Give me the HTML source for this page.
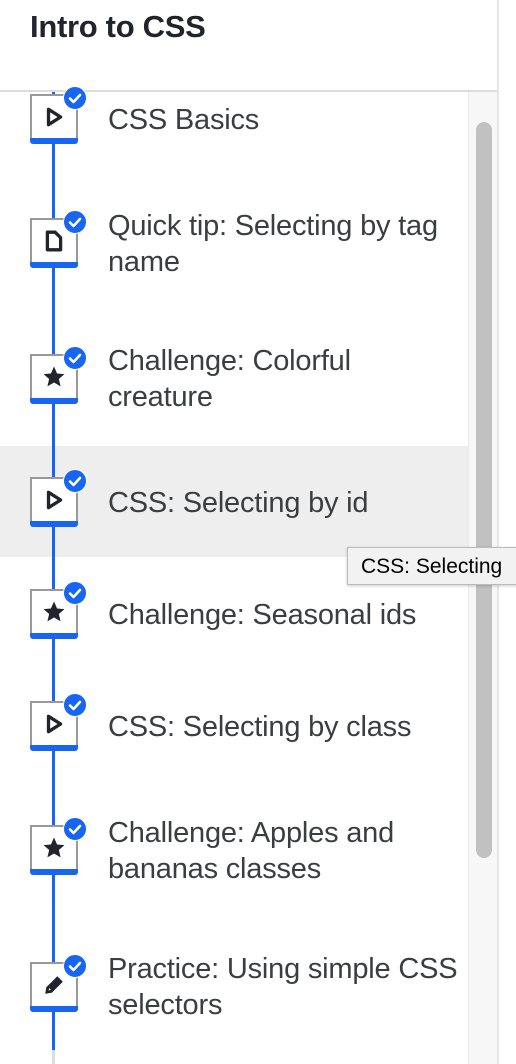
<!DOCTYPE html><html><head><style>
body{margin:0;width:516px;height:1064px;position:relative;overflow:hidden;background:#fff;font-family:"Liberation Sans",sans-serif;color:#3b3e40}
.hdr{position:absolute;left:30px;top:9px;font-size:31px;font-weight:bold;color:#21242c;letter-spacing:-0.3px}
.hl{position:absolute;left:0;top:90px;width:498px;height:2px;background:#ddd}
.vl{position:absolute;left:497px;top:0;width:2px;height:1064px;background:#e6e6e6}
.track{position:absolute;left:468px;top:92px;width:29px;height:972px;background:#f7f7f7;border-left:1px solid #ececec}
.thumb{position:absolute;left:476px;top:122px;width:16px;height:736px;border-radius:8px;background:#c1c1c1}
.line{position:absolute;left:52px;top:92px;width:3px;height:958px;background:#1865f2}
.line2{position:absolute;left:52px;top:1050px;width:3px;height:14px;background:#ddd}
.sel{position:absolute;left:0;top:446px;width:468px;height:111px;background:#eee}
.ic{position:absolute;left:30px;width:44px;height:42px;background:#fff;border:2px solid #999;border-bottom:none}
.ic::after{content:"";position:absolute;left:-2px;right:-2px;bottom:-6px;height:6px;background:#1865f2;border-radius:0 0 3px 3px}
.ic svg.g{position:absolute;left:11px;top:10px}
.bd{position:absolute;left:31px;top:-10px;width:22px;height:22px;border-radius:50%;background:#1865f2;border:1px solid #fff}
.t{position:absolute;left:108px;font-size:29px;line-height:36px;width:355px;letter-spacing:-0.2px}
.tip{position:absolute;left:347px;top:547px;width:175px;height:38px;background:#f2f2f2;border:1px solid #bbb;box-shadow:0 1px 3px rgba(0,0,0,.2);font-size:21px;line-height:38px;padding-left:13px;color:#000;box-sizing:border-box;white-space:nowrap;overflow:hidden}
</style></head><body>
<div class="hdr">Intro to CSS</div>
<div class="sel"></div>
<div class="track"></div><div class="thumb"></div>
<div class="hl"></div><div class="vl"></div>
<div class="line"></div><div class="line2"></div>

<svg width="0" height="0" style="position:absolute"><defs>
<symbol id="play" viewBox="0 0 20 20"><path d="M5 3 L16 10 L5 17 Z" fill="none" stroke="#21242c" stroke-width="3" stroke-linejoin="round"/></symbol>
<symbol id="doc" viewBox="0 0 20 20"><path d="M4 2 H11 L16 7 V18 H4 Z" fill="none" stroke="#21242c" stroke-width="3" stroke-linejoin="round"/></symbol>
<symbol id="star" viewBox="0 0 20 20"><path d="M10 0.5 L12.8 6.8 L19.5 7.4 L14.4 11.8 L16 18.5 L10 15 L4 18.5 L5.6 11.8 L0.5 7.4 L7.2 6.8 Z" fill="#21242c"/></symbol>
<symbol id="pen" viewBox="0 0 20 20"><path d="M2 18 L3 12 L13 2 L18 7 L8 17 Z" fill="#21242c"/><path d="M5 15 L5.8 12.8 L7.2 14.2 Z" fill="#fff"/></symbol>
<symbol id="chk" viewBox="0 0 22 22"><path d="M6 11.5 L9.5 15 L16 8" fill="none" stroke="#fff" stroke-width="2.6" stroke-linecap="round" stroke-linejoin="round"/></symbol>
</defs></svg>

<div class="ic" style="top:94px"><svg class="g" width="22" height="22"><use href="#play"/></svg><div class="bd"><svg width="22" height="22"><use href="#chk"/></svg></div></div>
<div class="t" style="top:102px">CSS Basics</div>

<div class="ic" style="top:218px"><svg class="g" width="22" height="22"><use href="#doc"/></svg><div class="bd"><svg width="22" height="22"><use href="#chk"/></svg></div></div>
<div class="t" style="top:208px">Quick tip: Selecting by tag name</div>

<div class="ic" style="top:354px"><svg class="g" width="22" height="22"><use href="#star"/></svg><div class="bd"><svg width="22" height="22"><use href="#chk"/></svg></div></div>
<div class="t" style="top:343px">Challenge: Colorful creature</div>

<div class="ic" style="top:477px"><svg class="g" width="22" height="22"><use href="#play"/></svg><div class="bd"><svg width="22" height="22"><use href="#chk"/></svg></div></div>
<div class="t" style="top:485px">CSS: Selecting by id</div>

<div class="ic" style="top:589px"><svg class="g" width="22" height="22"><use href="#star"/></svg><div class="bd"><svg width="22" height="22"><use href="#chk"/></svg></div></div>
<div class="t" style="top:597px">Challenge: Seasonal ids</div>

<div class="ic" style="top:701px"><svg class="g" width="22" height="22"><use href="#play"/></svg><div class="bd"><svg width="22" height="22"><use href="#chk"/></svg></div></div>
<div class="t" style="top:709px">CSS: Selecting by class</div>

<div class="ic" style="top:825px"><svg class="g" width="22" height="22"><use href="#star"/></svg><div class="bd"><svg width="22" height="22"><use href="#chk"/></svg></div></div>
<div class="t" style="top:815px">Challenge: Apples and bananas classes</div>

<div class="ic" style="top:962px"><svg class="g" width="22" height="22"><use href="#pen"/></svg><div class="bd"><svg width="22" height="22"><use href="#chk"/></svg></div></div>
<div class="t" style="top:951px">Practice: Using simple CSS selectors</div>

<div class="tip">CSS: Selecting</div>
</body></html>
